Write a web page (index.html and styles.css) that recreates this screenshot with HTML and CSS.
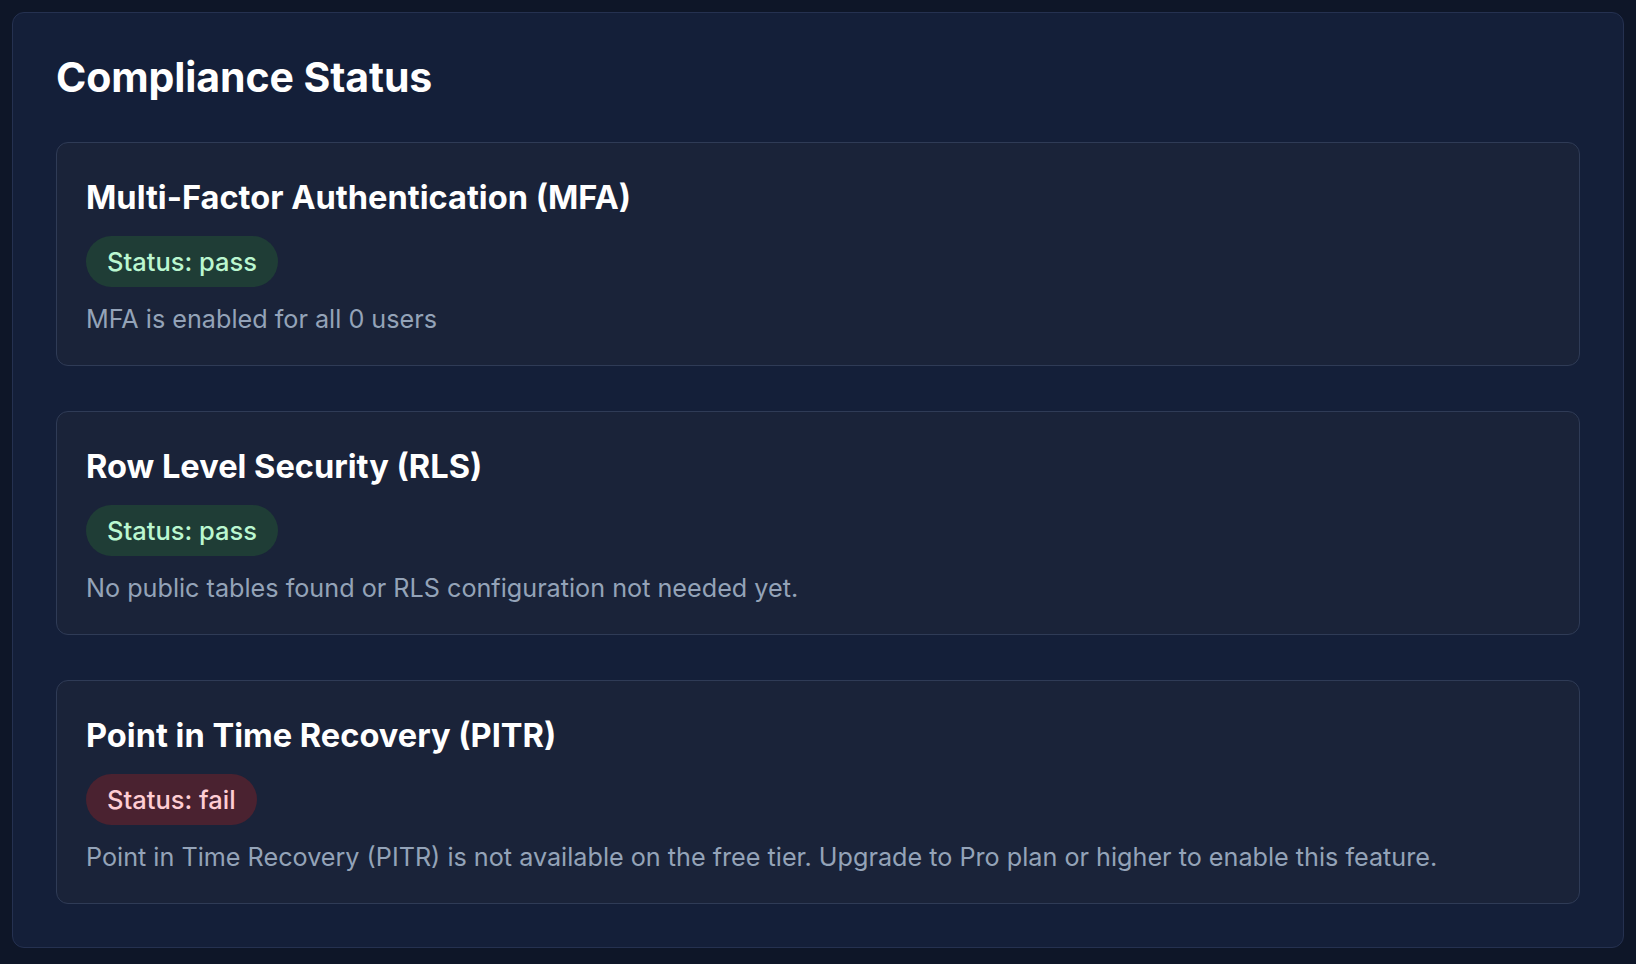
FILE: index.html
```html
<!DOCTYPE html>
<html lang="en">
<head>
<meta charset="utf-8">
<title>Compliance Status</title>
<link rel="stylesheet" href="styles.css">
</head>
<body>
<section class="panel">
  <h1 class="panel-title">Compliance Status</h1>
  <div class="checks">
    <article class="check">
      <h2 class="check-title">Multi-Factor Authentication (MFA)</h2>
      <span class="badge badge-pass">Status: pass</span>
      <p class="check-desc">MFA is enabled for all 0 users</p>
    </article>
    <article class="check">
      <h2 class="check-title">Row Level Security (RLS)</h2>
      <span class="badge badge-pass">Status: pass</span>
      <p class="check-desc">No public tables found or RLS configuration not needed yet.</p>
    </article>
    <article class="check">
      <h2 class="check-title">Point in Time Recovery (PITR)</h2>
      <span class="badge badge-fail">Status: fail</span>
      <p class="check-desc">Point in Time Recovery (PITR) is not available on the free tier. Upgrade to Pro plan or higher to enable this feature.</p>
    </article>
  </div>
</section>
</body>
</html>
```

FILE: styles.css
```css
* { box-sizing: border-box; }
html, body { margin: 0; }
body {
  background: #0e1628;
  padding: 12px 12px 16px;
  font-family: Inter, "Noto Sans", sans-serif;
  color: #fff;
}
.panel {
  background: #141f39;
  border: 1px solid #253150;
  border-radius: 12px;
  padding: 40px 43px 43px;
}
.panel-title {
  margin: 0 0 41px;
  font-size: 41px;
  line-height: 48px;
  font-weight: 700;
  letter-spacing: -0.1px;
}
.checks {
  display: flex;
  flex-direction: column;
  gap: 45px;
}
.check {
  background: #1a2339;
  border: 1px solid #2f3b56;
  border-radius: 12px;
  padding: 34px 29px 0;
  height: 224px;
}
.check-title {
  margin: 0 0 19px;
  font-size: 32.6px;
  line-height: 40px;
  font-weight: 700;
}
.badge {
  display: inline-block;
  height: 51px;
  line-height: 51px;
  padding: 0 21px;
  border-radius: 26px;
  font-size: 25.5px;
  font-weight: 500;
}
.badge-pass { background: #1f3d36; color: #bbf7d0; }
.badge-fail { background: #4a2230; color: #fecdd3; }
.check-desc {
  margin: 15px 0 0;
  font-size: 25.2px;
  line-height: 34px;
  color: #94a3b8;
}
```
